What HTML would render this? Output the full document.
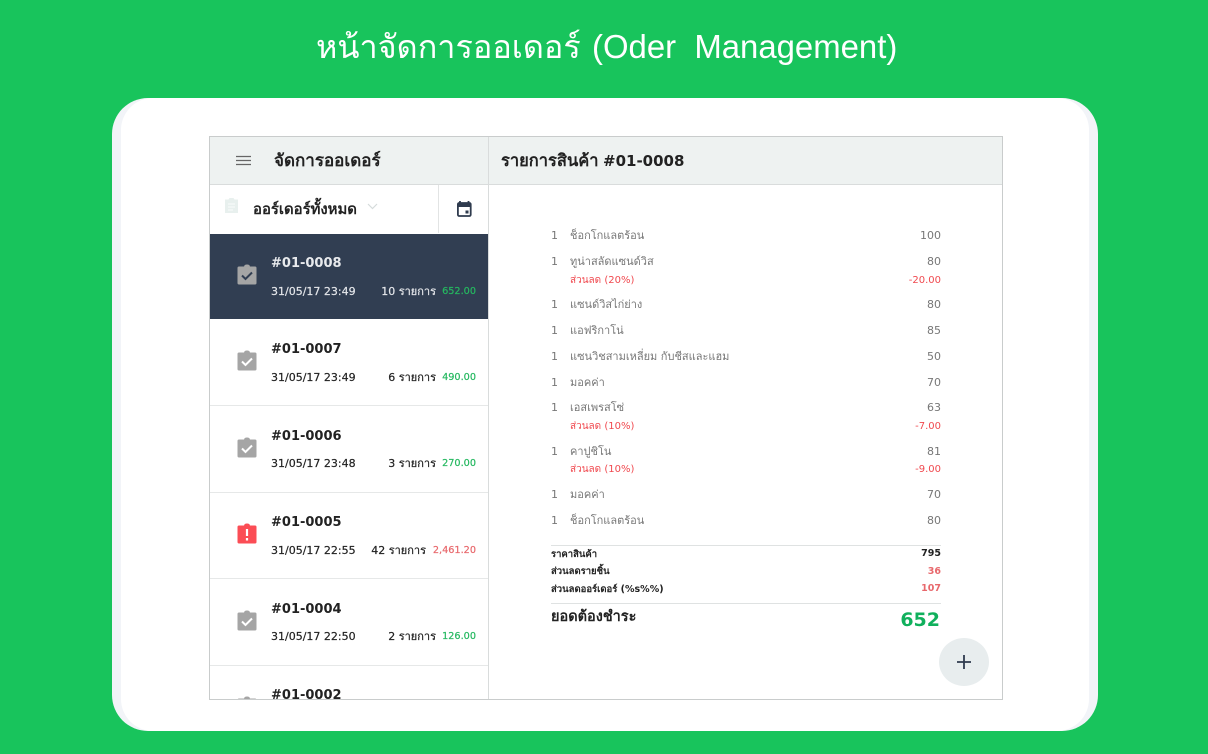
<!DOCTYPE html>
<html lang="th">
<head>
<meta charset="utf-8">
<style>
html,body{margin:0;padding:0;width:1208px;height:754px;overflow:hidden;background:#18c45c;}
body{position:relative;font-family:"DejaVu Sans","Liberation Sans","Noto Sans CJK SC",sans-serif;color:#222;}
.a{position:absolute;white-space:nowrap;}
.r{text-align:right;}
.panel{left:112px;top:98px;width:986px;height:633px;border-radius:36px;background:#f2f4f8;overflow:hidden;}
.panel i{position:absolute;left:9px;top:0;right:9px;bottom:0;background:#fff;border-radius:32px;}
.frame{left:209px;top:136px;width:792px;height:562px;border:1px solid #c9cccc;background:#fff;overflow:hidden;}
.h{font-size:11px;line-height:16px;color:#777;margin-top:1px;}
.d{font-size:10px;line-height:14px;color:#f0494f;margin-top:1px;}
.s{font-size:9.5px;line-height:14px;color:#222;font-weight:bold;margin-top:1px;}
.row-id{font-size:13px;line-height:20px;font-weight:bold;color:#222;margin-top:2px;}
.row-sub{font-size:11px;line-height:16px;color:#222;margin-top:1px;-webkit-text-stroke:.2px;}
.m{font-size:9.7px;}
.g{color:#25b860;}
</style>
</head>
<body>
<div class="a" style="left:316px;top:24px;font-size:32.4px;line-height:46px;color:#fff;font-family:'Liberation Sans',sans-serif;">หน้าจัดการออเดอร์</div>
<div class="a" style="left:592px;top:24px;font-size:32.9px;line-height:46px;color:#fff;font-family:'Liberation Sans',sans-serif;">(Oder&nbsp; Management)</div>

<div class="a panel"><i></i></div>

<div class="a frame"></div>
<!-- headers -->
<div class="a" style="left:210px;top:137px;width:792px;height:47px;background:#eef2f1;"></div>
<div class="a" style="left:210px;top:184px;width:792px;height:1px;background:#d9dcdc;"></div>
<div class="a" style="left:488px;top:137px;width:1px;height:562px;background:#d9dcdc;"></div>
<svg class="a" style="left:236px;top:155px;" width="16" height="12"><path d="M0 1.500H15M0 5.500H15M0 9.500H15" stroke="#666" stroke-width="1.200" fill="none"/></svg>
<div class="a" style="left:274px;top:149px;font-size:17px;line-height:24px;font-weight:bold;color:#222;">จัดการออเดอร์</div>
<div class="a" style="left:501px;top:149px;font-size:16.500px;line-height:24px;font-weight:bold;color:#222;">รายการสินค้า</div>
<div class="a" style="left:603px;top:149px;font-size:15px;line-height:24px;font-weight:bold;color:#222;">#01-0008</div>

<!-- filter -->
<svg class="a" style="left:224px;top:197px;" width="15" height="17"><path d="M1 2.500H4.500L5.500 1H9.500L10.500 2.500H14V16H1Z" fill="#e8f0ee"/><path d="M4 7H11M4 10H11M4 13H9" stroke="#f6faf9" stroke-width="1.200"/></svg>
<div class="a" style="left:253px;top:198px;font-size:14.900px;line-height:22px;font-weight:bold;color:#222;">ออร์เดอร์ทั้งหมด</div>
<svg class="a" style="left:367px;top:203px;" width="12" height="8"><path d="M1 1L5.500 5.500L10 1" stroke="#d5dbdb" stroke-width="1.200" fill="none"/></svg>
<div class="a" style="left:438px;top:185px;width:1px;height:48px;background:#e2e4e4;"></div>
<svg class="a" style="left:457px;top:201px;" width="15" height="16" viewBox="0 0 15 16"><path d="M3 0V3M11.500 0V3" stroke="#2f3b4e" stroke-width="1.800"/><rect x="0.900" y="2" width="12.800" height="13" rx="1.200" fill="none" stroke="#2f3b4e" stroke-width="1.800"/><rect x="1" y="2" width="12.500" height="4" fill="#2f3b4e"/><rect x="8.500" y="9.500" width="3" height="3" fill="#2f3b4e"/></svg>

<!-- list rows -->
<div class="a" style="left:210px;top:234px;width:278px;height:85px;background:#313e52;"></div>
<div class="a" style="left:210px;top:405px;width:278px;height:1px;background:#e6e8e8;"></div>
<div class="a" style="left:210px;top:492px;width:278px;height:1px;background:#e6e8e8;"></div>
<div class="a" style="left:210px;top:578px;width:278px;height:1px;background:#e6e8e8;"></div>
<div class="a" style="left:210px;top:665px;width:278px;height:1px;background:#e6e8e8;"></div>

<svg class="a" style="left:237px;top:264px;" width="20" height="21" viewBox="0 0 20 21"><rect x="0.500" y="2.500" width="19" height="18" rx="1.500" fill="#a5a5a5"/><path d="M7 3Q7 .5 10 .5Q13 .5 13 3Z" fill="#a5a5a5"/><path d="M5 11.500L8.500 15L15 8.500" stroke="#313e52" stroke-width="2" fill="none"/></svg>
<div class="a row-id" style="left:271px;top:252px;color:#e8eaed;">#01-0008</div>
<div class="a row-sub" style="left:271px;top:283px;color:#e4e6ea;">31/05/17 23:49</div>
<div class="a row-sub r" style="right:772px;top:283px;color:#e4e6ea;">10 รายการ</div>
<div class="a row-sub r g m" style="right:732px;top:283px;">652.00</div>

<svg class="a" style="left:237px;top:350px;" width="20" height="21" viewBox="0 0 20 21"><rect x="0.500" y="2.500" width="19" height="18" rx="1.500" fill="#a5a5a5"/><path d="M7 3Q7 .5 10 .5Q13 .5 13 3Z" fill="#a5a5a5"/><path d="M5 11.500L8.500 15L15 8.500" stroke="#fff" stroke-width="2" fill="none"/></svg>
<div class="a row-id" style="left:271px;top:338px;">#01-0007</div>
<div class="a row-sub" style="left:271px;top:369px;">31/05/17 23:49</div>
<div class="a row-sub r" style="right:772px;top:369px;">6 รายการ</div>
<div class="a row-sub r g m" style="right:732px;top:369px;">490.00</div>

<svg class="a" style="left:237px;top:437px;" width="20" height="21" viewBox="0 0 20 21"><rect x="0.500" y="2.500" width="19" height="18" rx="1.500" fill="#a5a5a5"/><path d="M7 3Q7 .5 10 .5Q13 .5 13 3Z" fill="#a5a5a5"/><path d="M5 11.500L8.500 15L15 8.500" stroke="#fff" stroke-width="2" fill="none"/></svg>
<div class="a row-id" style="left:271px;top:425px;">#01-0006</div>
<div class="a row-sub" style="left:271px;top:455px;">31/05/17 23:48</div>
<div class="a row-sub r" style="right:772px;top:455px;">3 รายการ</div>
<div class="a row-sub r g m" style="right:732px;top:455px;">270.00</div>

<svg class="a" style="left:237px;top:523px;" width="20" height="21" viewBox="0 0 20 21"><rect x="0.500" y="2.500" width="19" height="18" rx="1.500" fill="#fb4d55"/><path d="M7 3Q7 .5 10 .5Q13 .5 13 3Z" fill="#fb4d55"/><path d="M10 6V13M10 15V17.500" stroke="#fff" stroke-width="2.200" fill="none"/></svg>
<div class="a row-id" style="left:271px;top:511px;">#01-0005</div>
<div class="a row-sub" style="left:271px;top:542px;">31/05/17 22:55</div>
<div class="a row-sub r" style="right:782px;top:542px;">42 รายการ</div>
<div class="a row-sub r m" style="right:732px;top:542px;color:#e8686c;">2,461.20</div>

<svg class="a" style="left:237px;top:610px;" width="20" height="21" viewBox="0 0 20 21"><rect x="0.500" y="2.500" width="19" height="18" rx="1.500" fill="#a5a5a5"/><path d="M7 3Q7 .5 10 .5Q13 .5 13 3Z" fill="#a5a5a5"/><path d="M5 11.500L8.500 15L15 8.500" stroke="#fff" stroke-width="2" fill="none"/></svg>
<div class="a row-id" style="left:271px;top:598px;">#01-0004</div>
<div class="a row-sub" style="left:271px;top:628px;">31/05/17 22:50</div>
<div class="a row-sub r" style="right:772px;top:628px;">2 รายการ</div>
<div class="a row-sub r g m" style="right:732px;top:628px;">126.00</div>

<div class="a" style="left:210px;top:666px;width:278px;height:33px;overflow:hidden;">
<svg class="a" style="left:27px;top:30px;" width="20" height="21" viewBox="0 0 20 21"><rect x="0.500" y="2.500" width="19" height="18" rx="1.500" fill="#a5a5a5"/><path d="M7 3Q7 .5 10 .5Q13 .5 13 3Z" fill="#a5a5a5"/></svg>
<div class="a row-id" style="left:61px;top:18px;">#01-0002</div>
</div>

<!-- items -->
<div class="a h" style="left:551px;top:227px;">1</div><div class="a h" style="left:570px;top:227px;">ช็อกโกแลตร้อน</div><div class="a h r" style="right:267px;top:227px;">100</div>
<div class="a h" style="left:551px;top:253px;">1</div><div class="a h" style="left:570px;top:253px;">ทูน่าสลัดแซนด์วิส</div><div class="a h r" style="right:267px;top:253px;">80</div>
<div class="a d" style="left:570px;top:273px;">ส่วนลด (20%)</div><div class="a d r" style="right:267px;top:273px;">-20.00</div>
<div class="a h" style="left:551px;top:296px;">1</div><div class="a h" style="left:570px;top:296px;">แซนด์วิสไก่ย่าง</div><div class="a h r" style="right:267px;top:296px;">80</div>
<div class="a h" style="left:551px;top:322px;">1</div><div class="a h" style="left:570px;top:322px;">แอฟริกาโน่</div><div class="a h r" style="right:267px;top:322px;">85</div>
<div class="a h" style="left:551px;top:348px;">1</div><div class="a h" style="left:570px;top:348px;">แซนวิชสามเหลี่ยม กับชีสและแฮม</div><div class="a h r" style="right:267px;top:348px;">50</div>
<div class="a h" style="left:551px;top:374px;">1</div><div class="a h" style="left:570px;top:374px;">มอคค่า</div><div class="a h r" style="right:267px;top:374px;">70</div>
<div class="a h" style="left:551px;top:399px;">1</div><div class="a h" style="left:570px;top:399px;">เอสเพรสโซ่</div><div class="a h r" style="right:267px;top:399px;">63</div>
<div class="a d" style="left:570px;top:419px;">ส่วนลด (10%)</div><div class="a d r" style="right:267px;top:419px;">-7.00</div>
<div class="a h" style="left:551px;top:443px;">1</div><div class="a h" style="left:570px;top:443px;">คาปูชิโน</div><div class="a h r" style="right:267px;top:443px;">81</div>
<div class="a d" style="left:570px;top:462px;">ส่วนลด (10%)</div><div class="a d r" style="right:267px;top:462px;">-9.00</div>
<div class="a h" style="left:551px;top:486px;">1</div><div class="a h" style="left:570px;top:486px;">มอคค่า</div><div class="a h r" style="right:267px;top:486px;">70</div>
<div class="a h" style="left:551px;top:512px;">1</div><div class="a h" style="left:570px;top:512px;">ช็อกโกแลตร้อน</div><div class="a h r" style="right:267px;top:512px;">80</div>

<!-- totals -->
<div class="a" style="left:551px;top:545px;width:390px;height:1px;background:#dfe2e2;"></div>
<div class="a s" style="left:551px;top:547px;">ราคาสินค้า</div><div class="a s r" style="right:267px;top:546px;">795</div>
<div class="a s" style="left:551px;top:564px;">ส่วนลดรายชิ้น</div><div class="a s r" style="right:267px;top:564px;color:#e8686c;">36</div>
<div class="a s" style="left:551px;top:582px;">ส่วนลดออร์เดอร์ (%s%%)</div><div class="a s r" style="right:267px;top:581px;color:#e8686c;">107</div>
<div class="a" style="left:551px;top:603px;width:390px;height:1px;background:#dfe2e2;"></div>
<div class="a" style="left:551px;top:606px;font-size:14.500px;line-height:22px;font-weight:bold;color:#222;">ยอดต้องชำระ</div>
<div class="a r" style="right:268px;top:607px;font-size:19px;line-height:27px;font-weight:bold;color:#10b05c;">652</div>

<!-- FAB -->
<div class="a" style="left:939px;top:638px;width:50px;height:48px;border-radius:50%;background:#e8edee;"></div>
<svg class="a" style="left:956px;top:654px;" width="16" height="16"><path d="M8 1V15M1 8H15" stroke="#2f3b4e" stroke-width="1.800"/></svg>
</body>
</html>
